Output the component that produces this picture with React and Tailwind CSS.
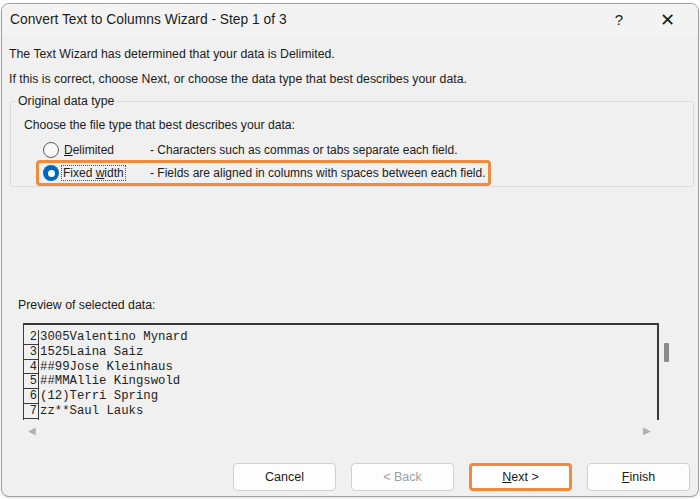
import React from 'react';

const rows = [
  ['2', '3005Valentino Mynard'],
  ['3', '1525Laina Saiz'],
  ['4', '##99Jose Kleinhaus'],
  ['5', '##MMAllie Kingswold'],
  ['6', '(12)Terri Spring'],
  ['7', 'zz**Saul Lauks'],
];

const Radio = ({ checked }) =>
  checked ? (
    <span className="w-[16px] h-[16px] rounded-full bg-[#0067c0] flex items-center justify-center shrink-0">
      <span className="w-[7px] h-[7px] rounded-full bg-white"></span>
    </span>
  ) : (
    <span className="w-[16px] h-[16px] rounded-full border border-[#5d5d5d] bg-[#f7f7f7] shrink-0"></span>
  );

const Btn = ({ children, disabled, hi }) => (
  <button
    className={
      'w-[103px] h-[28px] rounded-[4px] text-[12.5px] ' +
      (hi
        ? 'border-[3px] border-[#f08a3c] bg-white text-[#1b1b1b]'
        : 'border border-[#d0d0d0] bg-[#fdfdfd] ' + (disabled ? 'text-[#9d9d9d]' : 'text-[#1b1b1b]'))
    }
  >
    {children}
  </button>
);

export default function App() {
  return (
    <div className="w-[700px] h-[499px] bg-white pt-[3px] px-[1px] pb-[2px]" style={{ fontFamily: '"Liberation Sans", Arial, sans-serif' }}>
      <div className="h-full rounded-lg border border-[#a0a0a0] bg-[#f0f0f0] flex flex-col overflow-hidden shadow">
        <div className="h-[32px] bg-[#f3f3f3] flex items-center pl-[8px] pr-[7px] text-[13.8px] text-[#1b1b1b]">
          <span className="flex-1">Convert Text to Columns Wizard - Step 1 of 3</span>
          <span className="w-[48px] text-center text-[15px]">?</span>
          <span className="w-[48px] text-center text-[18px] font-light">✕</span>
        </div>
        <div className="flex-1 flex flex-col px-[7px] text-[12.3px] text-[#1b1b1b]">
          <p className="mt-[10px] leading-[16px]">The Text Wizard has determined that your data is Delimited.</p>
          <p className="mt-[9px] leading-[16px]">If this is correct, choose Next, or choose the data type that best describes your data.</p>
          <div className="mt-[14px] ml-[1px] w-[684px] h-[86px] border border-[#dcdcdc] rounded-[2px] relative pl-[13px]">
            <span className="absolute -top-[9px] left-[5px] px-[2px] bg-[#f0f0f0] text-[12.3px] leading-[16px]">Original data type</span>
            <p className="mt-[15px] text-[12.2px] leading-[16px]">Choose the file type that best describes your data:</p>
            <div className="mt-[7px] ml-[19px] flex items-center h-[20px] text-[12px]">
              <Radio />
              <span className="ml-[5px] w-[86px]"><span className="underline">D</span>elimited</span>
              <span className="whitespace-nowrap">- Characters such as commas or tabs separate each field.</span>
            </div>
            <div className="ml-[12px] w-[455px] h-[26px] border-[3px] border-[#f08a3c] rounded-[4px] flex items-center pl-[4px] text-[12px]">
              <Radio checked />
              <span className="ml-[2px] w-[89px]">
                <span className="border border-dotted border-[#555] px-[1px]">Fixed <span className="underline">w</span>idth</span>
              </span>
              <span className="whitespace-nowrap">- Fields are aligned in columns with spaces between each field.</span>
            </div>
          </div>
          <p className="mt-[110px] ml-[9px] leading-[16px]">Preview of selected data:</p>
          <div className="mt-[10px] ml-[14px] flex">
            <div className="w-[636px] h-[97px] border-t-2 border-r-2 border-l border-[#3a3a3a] bg-[#f0f0f0] pt-[5px] overflow-hidden" style={{ fontFamily: '"Liberation Mono", "Courier New", monospace' }}>
              {rows.map(([n, t]) => (
                <div key={n} className="flex h-[14.8px] leading-[14.8px] text-[12.3px] text-[#222]">
                  <span className="w-[15px] border-r border-b border-[#3a3a3a] text-right pr-[2px] tracking-[-1px] text-[12px]">{n}</span>
                  <span className="ml-[1px] whitespace-pre">{t}</span>
                </div>
              ))}
              <div className="w-[15px] h-[10px] border-r border-[#3a3a3a]"></div>
            </div>
            <div className="flex-1 flex pl-[5px] pt-[20px]">
              <span className="w-[5px] h-[19px] bg-[#8a8a8a] rounded-[1px]"></span>
            </div>
          </div>
          <div className="ml-[14px] w-[636px] h-[20px] flex items-center justify-between pl-[5px] pr-[8px] text-[#b0b0b0] text-[10px]">
            <span>◀</span>
            <span>▶</span>
          </div>
          <div className="mt-[23px] flex justify-end gap-[15px] pr-[1px]">
            <Btn>Cancel</Btn>
            <Btn disabled>&lt; Back</Btn>
            <Btn hi><span className="underline">N</span>ext &gt;</Btn>
            <Btn><span className="underline">F</span>inish</Btn>
          </div>
        </div>
      </div>
    </div>
  );
}
